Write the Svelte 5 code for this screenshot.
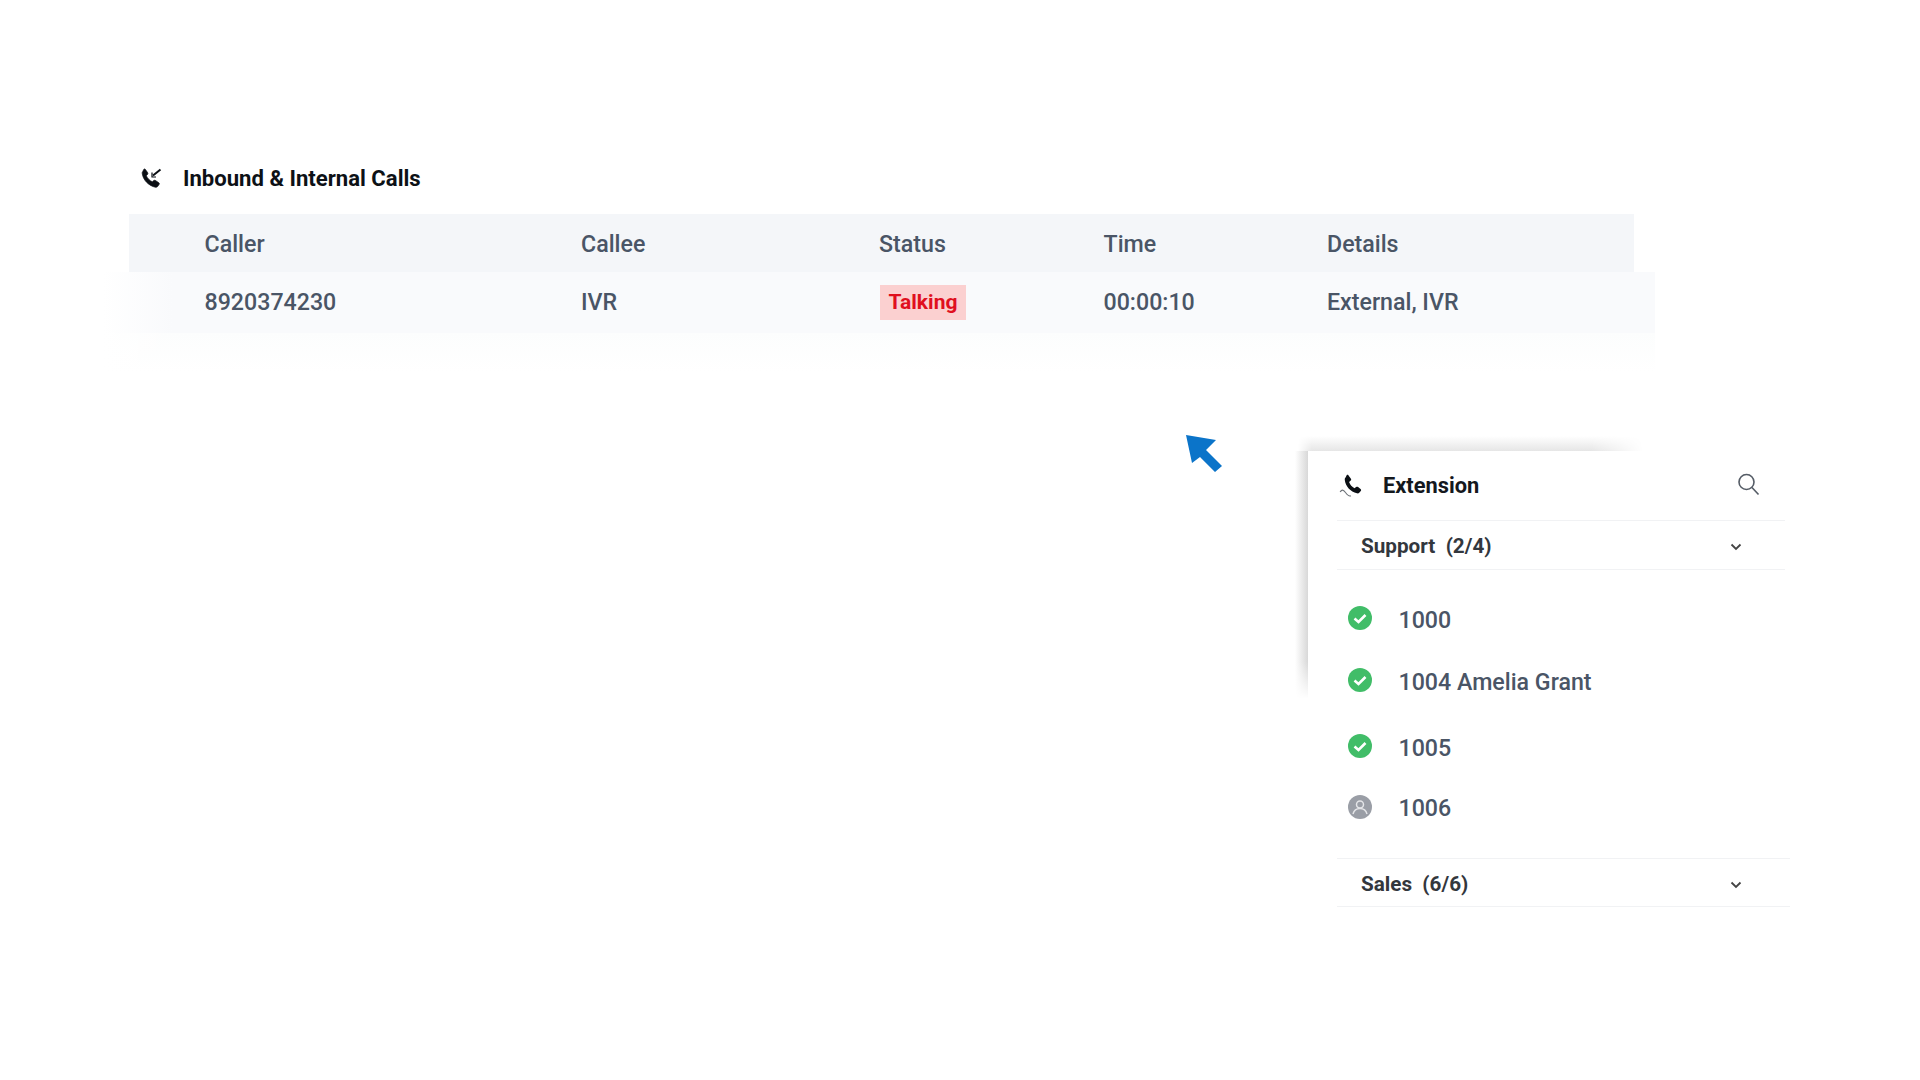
<script>
  const columns = ["Caller", "Callee", "Status", "Time", "Details"];

  const support = [
    { id: "1000", online: true },
    { id: "1004 Amelia Grant", online: true },
    { id: "1005", online: true },
    { id: "1006", online: false }
  ];
</script>

<div class="page">
  <div class="calls-title">
    <svg class="title-icon" viewBox="0 0 24 24" width="24" height="24">
      <path d="M6.200 3.200 8.600 6.600c.4.600.4 1.200-.1 1.800L7.300 9.700c1.200 2.700 3.300 4.900 6 6.100l1.400-1.200c.5-.4 1.200-.5 1.800-.1l3.300 2.300c.6.400.7 1.200.2 1.800l-1.400 1.900c-.5.600-1.200.9-2 .8C9.700 19.800 4 14.100 3.200 7.300c-.1-.8.1-1.500.7-2l.8-1.800c.4-.6 1.100-.8 1.500-.3z" fill="#0b0f14" stroke="#0b0f14" stroke-width=".7"/>
      <path d="M14 9.500 21.500 3.500" fill="none" stroke="#0b0f14" stroke-width="2"/>
      <path d="M13 6.500v4.500h4" fill="none" stroke="#0b0f14" stroke-width="1.200"/>
    </svg>
    <span>Inbound &amp; Internal Calls</span>
  </div>

  <div class="table">
    <div class="table-head">
      {#each columns as col}
        <div class="head-cell">{col}</div>
      {/each}
    </div>
    <div class="table-row">
      <div class="cell">8920374230</div>
      <div class="cell">IVR</div>
      <div><span class="badge">Talking</span></div>
      <div class="cell">00:00:10</div>
      <div class="cell">External, IVR</div>
    </div>
    <div class="table-fade"></div>
  </div>

  <div class="lower">
    <svg class="arrow" viewBox="0 0 38 38" width="38" height="38">
      <path d="M1 0 31 5 21 15 37 31 30 37 15 22 7 28z" fill="#0b74c9"/>
    </svg>

    <div class="panel">
      <div class="panel-head">
        <svg viewBox="0 0 24 24" width="26" height="26">
          <path d="M8.500 1.800 11 5.200c.4.600.3 1.200-.2 1.700L9.300 8.300c1 2.600 2.700 4.500 5 5.700l1.500-1.100c.6-.4 1.200-.4 1.800 0l2.300 1.800c.6.500.7 1.200.2 1.800l-1.200 1.500c-.6.700-1.400 1-2.300.8C10.500 17.300 6 12.500 5.300 6.300c-.1-.9.200-1.700.9-2.300l1-2.200c.3-.4.900-.4 1.300 0z" fill="#0b0f14"/>
          <path d="M1 17.500c2-3 3.500-1.500 5 .5s3.500 4 5 3" fill="none" stroke="#6b7076" stroke-width="1"/>
        </svg>
        <span class="panel-title">Extension</span>
        <svg class="search" viewBox="0 0 24 24" width="24" height="24">
          <circle cx="10.500" cy="10" r="7.500" fill="none" stroke="#555c66" stroke-width="1.600"/>
          <path d="M16 15.500 22.500 22.500" fill="none" stroke="#555c66" stroke-width="1.600"/>
        </svg>
      </div>

      <div class="group">
        <span>Support&nbsp; (2/4)</span>
        <svg viewBox="0 0 12 8" width="12" height="8"><path d="M1.500 1.500 6 6l4.500-4.500" fill="none" stroke="#444" stroke-width="1.800"/></svg>
      </div>

      <div class="members">
        {#each support as m}
          <div class="member">
            {#if m.online}
              <svg viewBox="0 0 24 24" width="24" height="24">
                <circle cx="12" cy="12" r="12" fill="#41bd68"/>
                <path d="M6.500 12.500 10.500 16 17.500 9" fill="none" stroke="#fff" stroke-width="2.600"/>
              </svg>
            {:else}
              <svg viewBox="0 0 24 24" width="24" height="24">
                <circle cx="12" cy="12" r="12" fill="#9a9ea6"/>
                <circle cx="12" cy="9.500" r="3.500" fill="none" stroke="#e4e5e8" stroke-width="1.500"/>
                <path d="M5 19c1-4 4-5.500 7-5.500s6 1.500 7 5.500" fill="none" stroke="#e4e5e8" stroke-width="1.500"/>
              </svg>
            {/if}
            <span>{m.id}</span>
          </div>
        {/each}
      </div>

      <div class="group sales">
        <span>Sales&nbsp; (6/6)</span>
        <svg viewBox="0 0 12 8" width="12" height="8"><path d="M1.500 1.500 6 6l4.500-4.500" fill="none" stroke="#444" stroke-width="1.800"/></svg>
      </div>
    </div>
  </div>
</div>

<style>
  :global(body) {
    margin: 0;
    background: #fff;
  }

  .page {
    width: 1920px;
    height: 1080px;
    overflow: hidden;
    box-sizing: border-box;
    padding-top: 164px;
    font-family: Roboto, "Liberation Sans", sans-serif;
    color: #4a5566;
  }

  .calls-title {
    display: flex;
    align-items: center;
    height: 28px;
    padding-left: 139px;
    gap: 20px;
    font-size: 22.100px;
    font-weight: 700;
    color: #0d1116;
  }

  .title-icon {
    flex: none;
  }

  .table {
    margin: 22px 0 0 103px;
    width: 1552px;
  }

  .table-head,
  .table-row {
    display: grid;
    grid-template-columns: 376.500px 298px 224.500px 223.500px 1fr;
    align-items: center;
    font-size: 23.200px;
    font-weight: 500;
  }

  .table-head {
    height: 58px;
    margin-left: 26px;
    width: 1505px;
    box-sizing: border-box;
    padding-left: 75.500px;
    background: #f4f6f9;
  }

  .head-cell {
    padding-top: 1px;
  }

  .table-row {
    height: 61px;
    padding-left: 101.500px;
    background: linear-gradient(90deg, #fff 0, #f9fafc 70px);
  }

  .cell {
    padding-bottom: 2px;
  }

  .table-fade {
    height: 40px;
    background: linear-gradient(90deg, #fff 0, transparent 70px), linear-gradient(180deg, #fcfdfd, #fff);
  }

  .badge {
    display: inline-block;
    width: 86px;
    height: 35px;
    margin-left: 1px;
    line-height: 35px;
    text-align: center;
    background: #fbd0d0;
    color: #e0101e;
    font-size: 21px;
    font-weight: 700;
  }

  .lower {
    display: flex;
    align-items: flex-start;
    margin-top: 62px;
    padding-left: 1185px;
  }

  .arrow {
    flex: none;
  }

  .panel {
    position: relative;
    flex: none;
    width: 490px;
    margin: 16px 0 0 85px;
    padding: 0 0 0 29px;
    box-sizing: border-box;
    background: #fff;
  }

  /* soft shadow only shows along the top and left edge */
  .panel::before,
  .panel::after {
    content: "";
    position: absolute;
  }

  .panel::before {
    left: -10px;
    top: -15px;
    width: 345px;
    height: 15px;
    background: linear-gradient(180deg, #fff 0, #e6e6e6 100%);
    -webkit-mask-image: linear-gradient(90deg, transparent, #000 4%, #000 85%, transparent);
    mask-image: linear-gradient(90deg, transparent, #000 4%, #000 85%, transparent);
  }

  .panel::after {
    left: -13px;
    top: 0;
    width: 13px;
    height: 248px;
    background: linear-gradient(90deg, #fff 0, #d8d8d8 100%);
    -webkit-mask-image: linear-gradient(180deg, #000 85%, transparent);
    mask-image: linear-gradient(180deg, #000 85%, transparent);
  }

  .panel-head {
    display: flex;
    align-items: center;
    height: 69px;
    padding-right: 38px;
    margin-left: 2px;
    gap: 18px;
  }

  .panel-title {
    flex: 1;
    font-size: 21.800px;
    font-weight: 700;
    color: #14181d;
  }

  .search {
    flex: none;
    margin-top: -4px;
  }

  .group {
    display: flex;
    align-items: center;
    justify-content: space-between;
    height: 50px;
    width: 448px;
    box-sizing: border-box;
    padding: 0 43px 0 24px;
    border-top: 1px solid #f1f2f4;
    border-bottom: 1px solid #f1f2f4;
    font-size: 20.700px;
    font-weight: 700;
    color: #33373d;
  }

  .group span {
    padding-top: 2px;
  }

  .group svg {
    margin-top: 4px;
  }

  .sales {
    width: 453px;
    height: 49px;
    padding-right: 48px;
  }

  .members {
    display: flex;
    flex-direction: column;
    height: 288px;
    box-sizing: border-box;
    padding: 17px 0 0 11px;
  }

  .member {
    display: flex;
    align-items: center;
    gap: 26.500px;
    height: 62px;
    font-size: 23.200px;
    font-weight: 500;
  }

  .member span {
    padding-top: 4px;
  }

  .member:nth-child(2) span {
    padding-top: 3px;
  }

  .member:nth-child(3) {
    margin-top: 4px;
  }

  .member:nth-child(4) {
    margin-top: -1px;
  }

  .member:nth-child(4) span {
    padding-top: 2px;
  }
</style>
